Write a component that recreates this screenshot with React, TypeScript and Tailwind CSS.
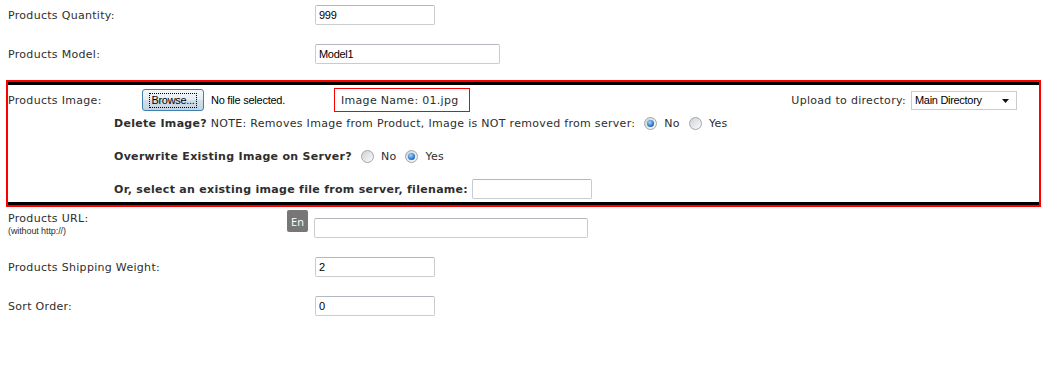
import React from "react";

function TextInput({ value, className }: { value?: string; className: string }) {
  return (
    <div
      className={`h-[20px] shrink-0 border border-[#c8cbd0] border-t-[#b4b8be] rounded-[2px] bg-white flex items-center px-[3px] text-[11px] font-['Liberation_Sans',Arial,sans-serif] tracking-[-0.3px] text-black ${className}`}
    >
      {value}
    </div>
  );
}

function Radio({ checked }: { checked?: boolean }) {
  return (
    <span className="inline-flex shrink-0 w-[13px] h-[13px] rounded-full border border-[#a3a6ab] bg-[linear-gradient(135deg,#cfd2d6,#fafafa)] items-center justify-center">
      {checked && (
        <span className="w-[7px] h-[7px] rounded-full bg-[radial-gradient(circle_at_40%_35%,#9fdcff,#2b74c9_60%,#0f4b91)]" />
      )}
    </span>
  );
}

function RadioOpt({ checked, label }: { checked?: boolean; label: string }) {
  return (
    <span className="inline-flex items-center ml-[9px]">
      <Radio checked={checked} />
      <span className="ml-[7px]">{label}</span>
    </span>
  );
}

export default function App() {
  return (
    <div className="w-[1052px] h-[367px] bg-white text-[#2e2e2e] font-['DejaVu_Sans',Verdana,sans-serif] text-[11px] leading-[13px] tracking-[0.3px] pl-[6px] overflow-hidden">
      {/* Products Quantity */}
      <div className="flex items-center h-[20px] mt-[5px] pl-[2px]">
        <div className="w-[307px] shrink-0">Products Quantity:</div>
        <TextInput value="999" className="w-[120px]" />
      </div>

      {/* Products Model */}
      <div className="flex items-center h-[20px] mt-[19px] pl-[2px]">
        <div className="w-[307px] shrink-0">Products Model:</div>
        <TextInput value="Model1" className="w-[185px]" />
      </div>

      {/* Products Image box */}
      <div className="mt-[16px] w-[1035px] border-2 border-[#ff0000]">
        <div className="border-y-[3px] border-black pt-[3px] pb-[3px]">
          {/* row 1 */}
          <div className="flex items-center h-[24px] pr-[22px]">
            <div className="w-[134px] shrink-0">Products Image:</div>
            <div className="w-[192px] shrink-0 flex items-center">
              <div className="w-[62px] h-[22px] rounded-[3px] border border-[#3c7fb1] bg-[linear-gradient(#f3f7fa,#e4ecf2_50%,#d2dee8_51%,#c5d4e2)] flex items-center justify-center font-['Liberation_Sans',Arial,sans-serif] text-[11px] tracking-[-0.3px] text-black">
                <span className="outline outline-1 outline-dotted outline-black px-[1px] leading-[13px]">
                  Browse...
                </span>
              </div>
              <span className="ml-[7px] font-['Liberation_Sans',Arial,sans-serif] text-[11px] tracking-[-0.25px] text-black">
                No file selected.
              </span>
            </div>
            <div className="w-[136px] h-[24px] shrink-0 border border-[#ff0000] flex items-center pl-[6px]">
              Image Name: 01.jpg
            </div>
            <div className="ml-auto flex items-center">
              <span>Upload to directory:</span>
              <div className="ml-[5px] w-[106px] h-[19px] border border-[#c9cbcf] bg-white flex items-center pl-[3px] pr-[7px] font-['Liberation_Sans',Arial,sans-serif] text-[11px] tracking-[-0.3px] text-black">
                <span>Main Directory</span>
                <svg className="ml-auto mt-[1px]" width="7" height="4" viewBox="0 0 7 4">
                  <polygon points="0,0 7,0 3.5,4" fill="#111" />
                </svg>
              </div>
            </div>
          </div>

          {/* row 2 */}
          <div className="flex items-center h-[22px] pl-[106px]">
            <span>
              <b>Delete Image?</b> NOTE: Removes Image from Product, Image is NOT removed from server:
            </span>
            <RadioOpt checked label="No" />
            <RadioOpt label="Yes" />
          </div>

          {/* row 3 */}
          <div className="flex items-center h-[22px] mt-[11px] pl-[106px]">
            <b>Overwrite Existing Image on Server?</b>
            <RadioOpt label="No" />
            <RadioOpt checked label="Yes" />
          </div>

          {/* row 4 */}
          <div className="flex items-center h-[20px] mt-[12px] pl-[106px]">
            <b>Or, select an existing image file from server, filename:</b>
            <TextInput className="w-[120px] ml-[4px]" />
          </div>
        </div>
      </div>

      {/* Products URL */}
      <div className="flex items-start mt-[3px] pl-[2px]">
        <div className="w-[279px] shrink-0 pt-[2px]">
          <div>Products URL:</div>
          <div className="mt-[1px] font-['Liberation_Sans',Arial,sans-serif] text-[9px] leading-[10px] tracking-[-0.1px]">
            (without http://)
          </div>
        </div>
        <div className="w-[21px] h-[22px] shrink-0 rounded-[2px] bg-[#777] text-white flex items-center justify-center font-['Open_Sans',sans-serif] text-[11px] tracking-normal">
          En
        </div>
        <TextInput className="w-[274px] ml-[6px] mt-[8px]" />
      </div>

      {/* Shipping weight */}
      <div className="flex items-center h-[20px] mt-[19px] pl-[2px]">
        <div className="w-[307px] shrink-0">Products Shipping Weight:</div>
        <TextInput value="2" className="w-[120px]" />
      </div>

      {/* Sort order */}
      <div className="flex items-center h-[20px] mt-[19px] pl-[2px]">
        <div className="w-[307px] shrink-0">Sort Order:</div>
        <TextInput value="0" className="w-[120px]" />
      </div>
    </div>
  );
}
